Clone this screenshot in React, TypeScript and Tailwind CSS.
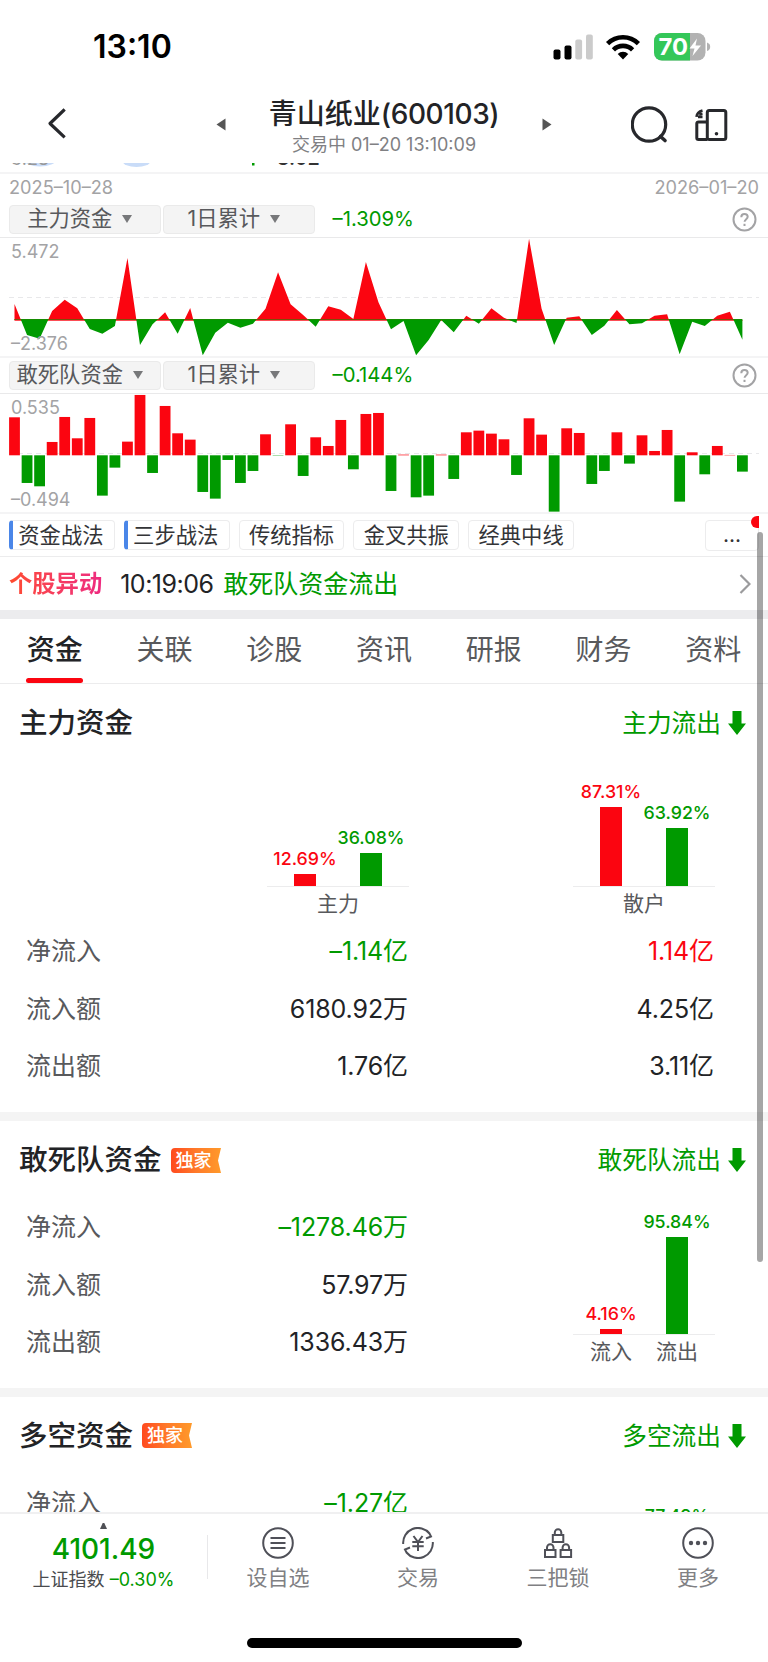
import { useState } from 'react';
import type { ReactNode } from 'react';

const RED = '#fb0510';
const GREEN = '#009a00';

const CHART_W = 768;
const STEP = 12.55;
const FIRST_X = 14.5;

// daily net flow of the main funds
const MAIN_FLOW = [
  48, -45, -56, 27, 61, 35, -27, -41, -18, 186, -75, -13, 23, -41, 36, -106, -38, -8, -23, -11,
  34, 143, 47, 15, -20, 41, 31, 3, 174, 53, -28, -3, -106, -60, 0, -37, 13, -11, 35, 7,
  -9, 244, 34, -75, 7, 11, -45, -17, 30, -13, -10, 13, 17, -103, -5, -18, 13, 25, -59,
];

// daily net flow of the short-term funds
const SHORT_FLOW = [
  114, -83, -93, 40, 115, 51, 112, -121, -37, 41, 181, -53, 148, 66, 47, -110, -130, -14, -83, -47,
  63, -1, 93, -62, 54, 28, 106, -42, 124, 127, -107, 2, -126, -121, 2, -71, 69, 74, 65, 48,
  -59, 111, 62, -169, 81, 67, -86, -47, 69, -25, 60, 13, 76, -139, 9, -57, 28, 1, -49,
];

const CHIPS = [
  { label: '资金战法', mark: true },
  { label: '三步战法', mark: true },
  { label: '传统指标', mark: false },
  { label: '金叉共振', mark: false },
  { label: '经典中线', mark: false },
];

const TABS = ['资金', '关联', '诊股', '资讯', '研报', '财务', '资料'];

function StatusBar() {
  return (
    <div className="flex h-[88px] shrink-0 items-center justify-between pt-[6px] pr-[57px] pl-[93px]">
      <div className="text-[32px] leading-none font-semibold text-black">13:10</div>
      <div className="flex items-center">
        <svg width="40" height="26" viewBox="0 0 40 26">
          <rect x="0.5" y="15.5" width="7" height="10" rx="2" fill="#000" />
          <rect x="11.5" y="11.5" width="7" height="14" rx="2" fill="#000" />
          <rect x="22.3" y="5.5" width="6.8" height="20" rx="2" fill="#cbcbcb" />
          <rect x="33" y="0.5" width="6.8" height="25" rx="2" fill="#cbcbcb" />
        </svg>
        <svg width="36" height="26" viewBox="0 0 36 26" className="ml-[12.5px]">
          <g fill="none" stroke="#000" strokeWidth="4.6">
            <path d="M2.6 9.6a22 22 0 0 1 30.8 0" />
            <path d="M8.4 15.8a13.6 13.6 0 0 1 19.2 0" />
          </g>
          <path d="M18 25.4l-5.3-5.4a7.6 7.6 0 0 1 10.6 0z" fill="#000" />
        </svg>
        <svg width="57" height="28" viewBox="0 0 57 28" className="ml-[13px]">
          <defs>
            <clipPath id="battery">
              <rect width="51.5" height="27.5" rx="8" />
            </clipPath>
          </defs>
          <g clipPath="url(#battery)">
            <rect width="52" height="28" fill="#b2b2b2" />
            <rect width="36" height="28" fill="#34c759" />
          </g>
          <path d="M53 9.5c2 .6 3.2 2.3 3.2 4.3s-1.2 3.7-3.2 4.3z" fill="#b2b2b2" />
          <text x="4.5" y="22.3" fontSize="23.5" fontWeight="700" fill="#fff" textLength="29.5" lengthAdjust="spacingAndGlyphs">
            70
          </text>
          <path d="M43 5.5l-7.5 10h5l-2 7.5 8.500-10.500h-5.500z" fill="#fff" />
        </svg>
      </div>
    </div>
  );
}

function Header() {
  return (
    <div className="flex h-[75px] shrink-0 items-center">
      <svg width="60" height="75" viewBox="0 0 60 75" className="ml-[40px]">
        <path d="M23.5 22.5L10 35.5l13.5 12.7" fill="none" stroke="#27282c" strokeWidth="3.2" strokeLinecap="square" strokeLinejoin="round" />
      </svg>
      <svg width="10" height="13" viewBox="0 0 10 13" className="mb-[2px] ml-[116px]">
        <path d="M9.5 .5v12L.5 6.5z" fill="#555" />
      </svg>
      <div className="flex w-[316px] flex-col items-center pt-[3px]">
        <div className="text-[28px] leading-[34px] font-medium whitespace-nowrap text-[#222326]">
          青山纸业<span className="tracking-[-0.4px]">(600103)</span>
        </div>
        <div className="text-[18px] leading-[27px] whitespace-nowrap text-[#808083]">交易中 01–20 13:10:09</div>
      </div>
      <svg width="10" height="13" viewBox="0 0 10 13" className="mb-[2px]">
        <path d="M.5 .5v12l9-6z" fill="#555" />
      </svg>
      <svg width="38" height="38" viewBox="0 0 38 38" className="mb-[2px] ml-[79px]">
        <circle cx="18" cy="18.5" r="16.7" fill="none" stroke="#27282c" strokeWidth="3.2" />
        <path d="M29.5 30.5l4.5 4" stroke="#27282c" strokeWidth="3.6" strokeLinecap="round" />
      </svg>
      <svg width="33" height="32" viewBox="0 0 33 32" className="mb-[2px] ml-[26px]" fill="none" stroke="#27282c" strokeWidth="3">
        <rect x="12.3" y="1.5" width="18.5" height="29" rx="2" />
        <path d="M12.3 13H3.5Q1.8 13 1.8 14.5v14.5q0 1.5 1.7 1.5h8.8" />
        <path d="M1.5 7.8Q2 3 7.5 1.5M3 7.9h4.5M4.2 5.2l3.3-.4" strokeWidth="2.6" />
        <circle cx="21.5" cy="24.7" r="1.8" fill="#27282c" stroke="none" />
      </svg>
    </div>
  );
}

// tail of the k-line chart scrolled under the header
function KLineTail() {
  return (
    <div className="relative h-[11px] shrink-0 overflow-hidden border-b-2 border-[#f4f4f5]">
      <svg width="768" height="10" viewBox="0 0 768 10" className="absolute top-0 left-0">
        <ellipse cx="40" cy="-3" rx="16" ry="6.5" fill="#c9dcf8" />
        <ellipse cx="136.5" cy="-2" rx="14" ry="6" fill="#c9dcf8" />
        <rect x="252" y="0" width="2.5" height="2.5" fill={GREEN} />
      </svg>
      <span className="absolute top-[-15px] left-[11px] text-[18px] leading-[22px] text-[#999]">3.28</span>
      <span className="absolute top-[-16px] left-[277px] text-[20px] leading-[22px] font-medium text-[#333]">3.02</span>
    </div>
  );
}

function SelectButton({ label }: { label: string }) {
  return (
    <button className="flex h-[29px] w-[151.5px] items-center justify-center gap-[10px] rounded-[4px] border border-[#eaeaea] bg-[#f4f4f4] pr-[10px] pb-[2px] text-[21.3px] leading-[27px] text-[#58595c]">
      {label}
      <svg width="10" height="8" viewBox="0 0 10 8">
        <path d="M0 0h10L5 8z" fill="#77787a" />
      </svg>
    </button>
  );
}

function FilterRow({ name, value }: { name: string; value: string }) {
  return (
    <div className="flex h-[36px] shrink-0 items-center border-b border-[#e9e9ea] pr-[11px] pl-[9px]">
      <SelectButton label={name} />
      <div className="ml-[2.5px]">
        <SelectButton label="1日累计" />
      </div>
      <div className="ml-[18px] text-[20.3px] text-[#009a00]">{value}</div>
      <svg width="25" height="25" viewBox="0 0 25 25" className="ml-auto" fill="none" stroke="#a3a3a5" strokeWidth="2">
        <circle cx="12.5" cy="12.5" r="11" />
        <path d="M9.3 10.2c0-2 1.4-3.2 3.2-3.2s3.2 1.1 3.2 2.8c0 2.3-3.1 2.5-3.1 5" />
        <path d="M12.5 16.8v2.2" />
      </svg>
    </div>
  );
}

function ChartFrame({ top, bottom, children }: { top: string; bottom: string; children: ReactNode }) {
  return (
    <div className="relative h-[120px] shrink-0 border-b-2 border-[#f4f4f5]">
      {children}
      <span className="absolute top-[3px] left-[11px] text-[18px] leading-[22px] text-[#a3a3a5]">{top}</span>
      <span className="absolute top-[95px] left-[11px] text-[18px] leading-[22px] text-[#a3a3a5]">{bottom}</span>
    </div>
  );
}

function AreaChart() {
  const zero = 82;
  const lastX = FIRST_X + (MAIN_FLOW.length - 1) * STEP;
  const points = MAIN_FLOW.map((v, i) => `${FIRST_X + i * STEP},${zero - v / 3}`).join(' ');
  const shape = `${FIRST_X},${zero} ${points} ${lastX},${zero}`;
  return (
    <svg width={CHART_W} height="118" viewBox={`0 0 ${CHART_W} 118`} className="block">
      <defs>
        <clipPath id="above">
          <rect x="0" y="0" width={CHART_W} height={zero + 0.5} />
        </clipPath>
        <clipPath id="below">
          <rect x="0" y={zero - 0.5} width={CHART_W} height="60" />
        </clipPath>
      </defs>
      <path d="M9 59.5H759" stroke="#e8e8ea" strokeDasharray="5 4" />
      <path d={`M${FIRST_X} ${zero - 0.5}H${lastX}`} stroke={GREEN} />
      <path d={`M${FIRST_X} ${zero + 0.4}H${lastX}`} stroke={RED} strokeWidth=".8" />
      <polygon points={shape} fill={RED} clipPath="url(#above)" />
      <polygon points={shape} fill={GREEN} clipPath="url(#below)" />
    </svg>
  );
}

function BarChart() {
  const zero = 61.3;
  return (
    <svg width={CHART_W} height="118" viewBox={`0 0 ${CHART_W} 118`} className="block">
      <path d="M9 59.5H759" stroke="#e8e8ea" strokeDasharray="5 4" />
      {SHORT_FLOW.map((v, i) => (
        <rect
          key={i}
          x={FIRST_X + i * STEP - 5.4}
          y={v > 0 ? zero - v / 3 : zero}
          width="10.8"
          height={Math.abs(v) / 3}
          fill={v > 0 ? RED : GREEN}
        />
      ))}
    </svg>
  );
}

function ChipRow() {
  return (
    <div className="flex h-[43px] shrink-0 items-center gap-[9px] border-b border-[#ececed] px-[9px]">
      {CHIPS.map((c) => (
        <div
          key={c.label}
          className={`flex h-[30px] w-[105.8px] items-center justify-center overflow-hidden rounded-[4px] border border-[#ececed] text-[21.3px] leading-[28px] text-[#333437] ${
            c.mark ? 'border-l-4 border-l-[#4a86e8] pr-[5px]' : ''
          }`}
        >
          {c.label}
        </div>
      ))}
      <div className="relative ml-auto flex h-[31px] w-[54px] items-center justify-center rounded-[4px] border border-[#ececed] text-[21px] text-[#333437]">
        ...
        <span className="absolute -top-[5px] -right-[1px] h-[12px] w-[8px] rounded-l-full bg-[#fb0510]" />
      </div>
    </div>
  );
}

function AlertRow() {
  return (
    <div className="flex h-[53px] shrink-0 items-center pt-[2px] pr-[17px] pl-[9px]">
      <span className="bg-gradient-to-r from-[#ff4a2a] to-[#ee2a80] bg-clip-text text-[23.3px] font-bold text-transparent">个股异动</span>
      <span className="ml-[18px] w-[103px] text-[25px] tracking-[-0.5px] text-[#222326]">10:19:06</span>
      <span className="text-[25px] text-[#009a00]">敢死队资金流出</span>
      <svg width="12" height="22" viewBox="0 0 12 22" className="mb-px ml-auto">
        <path d="M1.5 2l9 9-9 9" fill="none" stroke="#9b9b9d" strokeWidth="2.2" />
      </svg>
    </div>
  );
}

function DownArrow() {
  return (
    <svg width="18" height="24" viewBox="0 0 18 24" className="ml-[7px]">
      <path d="M4.5 0h9v12.500H18L9 24 0 12.500h4.500z" fill={GREEN} />
    </svg>
  );
}

function Badge() {
  return (
    <span className="relative ml-[9px] flex h-[25px] w-[50px] items-center">
      <svg width="50" height="25" viewBox="0 0 50 25" className="absolute top-0 left-0">
        <defs>
          <linearGradient id="badge" x1="0" y1="0" x2="1" y2="0">
            <stop offset="0" stopColor="#ff4a1f" />
            <stop offset=".5" stopColor="#ff7a2a" />
            <stop offset="1" stopColor="#ff9a2a" />
          </linearGradient>
        </defs>
        <path d="M4 0h46l-3 12.500 3 12.500H4q-4 0-4-4V4q0-4 4-4z" fill="url(#badge)" />
      </svg>
      <span className="relative mt-px ml-[5px] text-[18px] leading-[24px] font-medium text-white">独家</span>
    </span>
  );
}

function SectionHead({ title, flow, badge }: { title: string; flow: string; badge?: boolean }) {
  return (
    <div className="flex h-[76px] items-center pt-[2px] pr-[22px] pl-[19px]">
      <h2 className="text-[28.5px] leading-[36px] font-medium text-[#222326]">{title}</h2>
      {badge && <Badge />}
      <span className="ml-auto text-[24.7px] leading-[32px] text-[#009a00]">{flow}</span>
      <DownArrow />
    </div>
  );
}

interface Bar {
  pct: string;
  height: number;
  color: 'red' | 'green';
  label?: string;
}

function MiniBars({ bars, caption }: { bars: Bar[]; caption?: string }) {
  return (
    <div className="w-[142px]">
      <div className="flex items-end border-b border-[#ececed] px-[5px]">
        {bars.map((b) => (
          <div key={b.pct} className="flex w-[66px] flex-col items-center">
            <span className={`text-[17.8px] leading-[24px] font-medium ${b.color === 'red' ? 'text-[#fb0510]' : 'text-[#009a00]'}`}>
              {b.pct}
            </span>
            <div
              className={`mt-[3px] w-[22px] ${b.color === 'red' ? 'bg-[#fb0510]' : 'bg-[#009a00]'}`}
              style={{ height: b.height }}
            />
          </div>
        ))}
      </div>
      {caption ? (
        <div className="pt-[3px] text-center text-[21px] leading-[28px] text-[#58595c]">{caption}</div>
      ) : (
        <div className="flex px-[5px] pt-[3px]">
          {bars.map((b) => (
            <div key={b.pct} className="w-[66px] text-center text-[21px] leading-[28px] text-[#58595c]">
              {b.label}
            </div>
          ))}
        </div>
      )}
    </div>
  );
}

function Row({ label, value, second, tone }: { label: string; value: string; second?: string; tone?: boolean }) {
  return (
    <div className="flex h-[57.5px] items-center text-[25px] leading-[32px] tracking-[-0.1px] text-[#222326]">
      <span className="w-[100px] tracking-normal text-[#58595c]">{label}</span>
      <span className={`w-[282px] text-right ${tone ? 'text-[#009a00]' : ''}`}>{value}</span>
      {second && <span className={`w-[306px] text-right ${tone ? 'text-[#fb0510]' : ''}`}>{second}</span>}
    </div>
  );
}

function Lock({ x, y }: { x: number; y: number }) {
  return (
    <g transform={`translate(${x} ${y})`}>
      <rect x="0" y="6" width="10.5" height="7" />
      <path d="M2 6V3.5a3.2 3.2 0 0 1 6.5 0V6" />
    </g>
  );
}

function BottomNav() {
  const items = [
    {
      label: '设自选',
      icon: (
        <>
          <circle cx="16" cy="16" r="14.8" />
          <path d="M8.5 11h15M8.5 16h15M8.5 21h15" />
        </>
      ),
    },
    {
      label: '交易',
      icon: (
        <>
          <path d="M1.2 17A14.8 14.8 0 0 1 27.500 6.500L29 9.500l-5 2" />
          <path d="M30.800 15A14.800 14.800 0 0 1 4.500 25.500L3 22.500l5-2" />
          <path d="M11.500 9l4.500 6 4.500-6M10.300 15h11.400M10.300 19.200h11.400M16 15v9" />
        </>
      ),
    },
    {
      label: '三把锁',
      icon: (
        <>
          <Lock x={10.8} y={2} />
          <Lock x={3} y={17} />
          <Lock x={18.6} y={17} />
        </>
      ),
    },
    {
      label: '更多',
      icon: (
        <>
          <circle cx="16" cy="16" r="14.8" />
          <g fill="#4f5058" stroke="none">
            <circle cx="9" cy="16" r="2.2" />
            <circle cx="16" cy="16" r="2.2" />
            <circle cx="23" cy="16" r="2.2" />
          </g>
        </>
      ),
    },
  ];
  return (
    <div className="flex h-[150px] shrink-0 flex-col items-center border-t-2 border-[#f0f0f1] bg-white">
      <div className="flex h-[111px] w-full">
        <div className="flex w-[207px] flex-col items-center pt-[9px]">
          <svg width="7" height="6" viewBox="0 0 7 6">
            <path d="M2.7 0h1.6L7 6H0z" fill="#4f5055" />
          </svg>
          <span className="mt-[3px] text-[28px] leading-[34px] font-medium text-[#009a00]">4101.49</span>
          <span className="mt-px text-[18px] leading-[26px] whitespace-nowrap text-[#4a4b4e]">
            上证指数 <span className="text-[#009a00]">–0.30%</span>
          </span>
        </div>
        <div className="mt-[21px] h-[44px] w-px bg-[#e8e8ea]" />
        {items.map((it) => (
          <div key={it.label} className="flex flex-1 flex-col items-center pt-[13px]">
            <svg width="32" height="32" viewBox="0 0 32 32" fill="none" stroke="#4f5058" strokeWidth="2">
              {it.icon}
            </svg>
            <span className="mt-[5px] text-[21px] leading-[28px] text-[#808083]">{it.label}</span>
          </div>
        ))}
      </div>
      <div className="mt-[13px] h-[10px] w-[275px] rounded-full bg-black" />
    </div>
  );
}

export default function App() {
  const [tab, setTab] = useState(0);

  return (
    <div className="relative flex h-[1662px] w-[768px] flex-col overflow-hidden bg-white font-['Inter','Noto_Sans_CJK_SC',sans-serif]">
      <StatusBar />
      <Header />
      <div className="flex min-h-0 flex-1 flex-col overflow-hidden">
        <KLineTail />
        <div className="flex h-[28px] shrink-0 items-center justify-between px-[9px] pb-px text-[18.2px] text-[#a3a3a5]">
          <span>2025–10–28</span>
          <span>2026–01–20</span>
        </div>
        <FilterRow name="主力资金" value="–1.309%" />
        <ChartFrame top="5.472" bottom="–2.376">
          <AreaChart />
        </ChartFrame>
        <FilterRow name="敢死队资金" value="–0.144%" />
        <ChartFrame top="0.535" bottom="–0.494">
          <BarChart />
        </ChartFrame>
        <ChipRow />
        <AlertRow />
        <div className="h-[9px] shrink-0 bg-[#ececee]" />

        <div className="flex h-[65px] shrink-0 border-b border-[#ececed]">
          {TABS.map((t, i) => (
            <button
              key={t}
              onClick={() => setTab(i)}
              className={`flex flex-1 flex-col items-center justify-between pt-[13px] text-[28px] leading-[36px] ${
                i === tab ? 'font-medium text-[#222326]' : 'text-[#58595c]'
              }`}
            >
              {t}
              {i === tab && <span className="h-[5px] w-[57px] rounded-full bg-[#fb0510]" />}
            </button>
          ))}
        </div>

        <section className="h-[428px] shrink-0">
          <SectionHead title="主力资金" flow="主力流出" />
          <div className="flex items-end justify-between pt-[20px] pr-[53px] pl-[267px]">
            <MiniBars
              caption="主力"
              bars={[
                { pct: '12.69%', height: 11.5, color: 'red' },
                { pct: '36.08%', height: 32.5, color: 'green' },
              ]}
            />
            <MiniBars
              caption="散户"
              bars={[
                { pct: '87.31%', height: 78.5, color: 'red' },
                { pct: '63.92%', height: 57.5, color: 'green' },
              ]}
            />
          </div>
          <div className="pt-[5px] pl-[26px]">
            <Row label="净流入" value="–1.14亿" second="1.14亿" tone />
            <Row label="流入额" value="6180.92万" second="4.25亿" />
            <Row label="流出额" value="1.76亿" second="3.11亿" />
          </div>
        </section>
        <div className="h-[9px] shrink-0 bg-[#f4f4f4]" />

        <section className="h-[266.5px] shrink-0">
          <SectionHead title="敢死队资金" flow="敢死队流出" badge />
          <div className="flex justify-between pr-[53px] pl-[26px]">
            <div className="pt-[1.5px]">
              <Row label="净流入" value="–1278.46万" tone />
              <Row label="流入额" value="57.97万" />
              <Row label="流出额" value="1336.43万" />
            </div>
            <div className="pt-[13px]">
              <MiniBars
                bars={[
                  { pct: '4.16%', height: 4.5, color: 'red', label: '流入' },
                  { pct: '95.84%', height: 96.5, color: 'green', label: '流出' },
                ]}
              />
            </div>
          </div>
        </section>
        <div className="h-[9px] shrink-0 bg-[#f4f4f4]" />

        <section className="shrink-0">
          <SectionHead title="多空资金" flow="多空流出" badge />
          <div className="flex justify-between pr-[53px] pl-[26px]">
            <div className="pt-[1.5px]">
              <Row label="净流入" value="–1.27亿" tone />
            </div>
            <div className="pt-[31px]">
              <MiniBars
                bars={[
                  { pct: '22.51%', height: 22, color: 'red', label: '流入' },
                  { pct: '77.49%', height: 76, color: 'green', label: '流出' },
                ]}
              />
            </div>
          </div>
        </section>
      </div>
      <BottomNav />

      {/* scroll indicator */}
      <div className="absolute top-[532px] left-[757px] h-[730px] w-[5.5px] rounded-full bg-black/35" />
    </div>
  );
}
